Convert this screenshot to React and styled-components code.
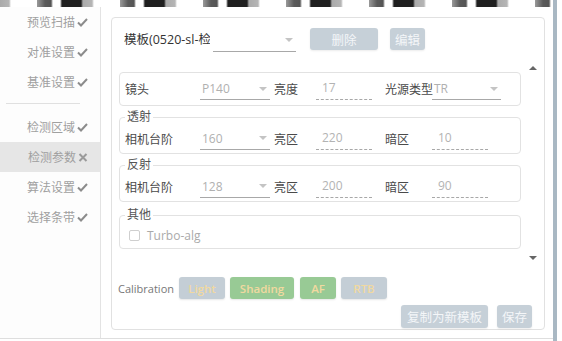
import React from 'react';
import styled, { createGlobalStyle } from 'styled-components';

const GlobalStyle = createGlobalStyle`
  * { box-sizing: border-box; }
  html, body { margin: 0; padding: 0; background: #fff; }
  body { font-family: "Open Sans", "Noto Sans CJK SC", sans-serif; }
`;

const menu = [
  { name: '预览扫描', state: 'ok' },
  { name: '对准设置', state: 'ok' },
  { name: '基准设置', state: 'ok' },
  { divider: true },
  { name: '检测区域', state: 'ok' },
  { name: '检测参数', state: 'fail', active: true },
  { name: '算法设置', state: 'ok' },
  { name: '选择条带', state: 'ok' },
];

const CheckIcon = () => (
  <svg width="11" height="9" viewBox="0 0 11 9">
    <path d="M1 4.5 L4 7.5 L10 1" fill="none" stroke="#8c8c8c" strokeWidth="2" />
  </svg>
);

const CrossIcon = () => (
  <svg width="10" height="9" viewBox="0 0 10 9">
    <path d="M1.5 1 L8.5 8 M8.5 1 L1.5 8" fill="none" stroke="#9a9a9a" strokeWidth="2" />
  </svg>
);

const SelectBox = ({ value, width }) => (
  <Select $width={width}>
    <span>{value}</span>
    <Caret />
  </Select>
);

const App = () => (
  <>
    <GlobalStyle />
    <Screen>
      <Content>
        <TopStrip />
        <Body>
          <Sidebar>
            {menu.map((m, i) =>
              m.divider ? (
                <Divider key={i} />
              ) : (
                <MenuItem key={i} $active={m.active}>
                  {m.name}
                  {m.state === 'ok' ? <CheckIcon /> : <CrossIcon />}
                </MenuItem>
              )
            )}
          </Sidebar>
          <Main>
            <Panel>
              <Header>
                <TemplateName>模板(0520-sl-检测参数)</TemplateName>
                <SelectBox value="" width={83} />
                <GrayButton $width={68} $ml={14}>删除</GrayButton>
                <GrayButton $width={35} $ml={12}>编辑</GrayButton>
              </Header>

              <ScrollArea>
                <FieldList>
                  <Group $plain>
                    <Row $height={30}>
                      <Label>镜头</Label>
                      <SelectBox value="P140" width={70} />
                      <Label $pl={4}>亮度</Label>
                      <Input>17</Input>
                      <Label $pl={13}>光源类型</Label>
                      <SelectBox value="TR" width={69} />
                    </Row>
                  </Group>
                  <Group>
                    <Legend>透射</Legend>
                    <Row>
                      <Label>相机台阶</Label>
                      <SelectBox value="160" width={70} />
                      <Label $pl={4}>亮区</Label>
                      <Input>220</Input>
                      <Label $pl={13}>暗区</Label>
                      <Input>10</Input>
                    </Row>
                  </Group>
                  <Group>
                    <Legend>反射</Legend>
                    <Row>
                      <Label>相机台阶</Label>
                      <SelectBox value="128" width={70} />
                      <Label $pl={4}>亮区</Label>
                      <Input>200</Input>
                      <Label $pl={13}>暗区</Label>
                      <Input>90</Input>
                    </Row>
                  </Group>
                  <Group $mt={2}>
                    <Legend>其他</Legend>
                    <CheckRow>
                      <CheckBox />
                      <CheckLabel>Turbo-alg</CheckLabel>
                    </CheckRow>
                  </Group>
                </FieldList>
                <ArrowCol>
                  <Arrow $up />
                  <Arrow />
                </ArrowCol>
              </ScrollArea>

              <CalibrationRow>
                <CalLabel>Calibration</CalLabel>
                <CalButton $width={46}>Light</CalButton>
                <CalButton $width={64} $done>Shading</CalButton>
                <CalButton $width={36} $done $ml={1}>AF</CalButton>
                <CalButton $width={46}>RTB</CalButton>
              </CalibrationRow>

              <Footer>
                <GrayButton $width={87} $height={23}>复制为新模板</GrayButton>
                <GrayButton $width={35} $height={23} $ml={9}>保存</GrayButton>
              </Footer>
            </Panel>
          </Main>
        </Body>
      </Content>
      <ScrollRail />
    </Screen>
  </>
);

export default App;

const Screen = styled.div`
  width: 562px;
  height: 341px;
  display: flex;
  overflow: hidden;
  background: #fff;
`;

const Content = styled.div`
  width: 553px;
  display: flex;
  flex-direction: column;
`;

const ScrollRail = styled.div`
  width: 4px;
  background: #a9b8c3;
`;

const TopStrip = styled.div`
  height: 7px;
  flex-shrink: 0;
  background-image: linear-gradient(
    90deg,
    #9a9a9a 0px, #5a5a5a 8px, #555 14px,
    #fff 16px, #fff 23px,
    #1f1f1f 25px, #1f1f1f 44px,
    #aaa 46px, #b5b5b5 55px,
    #fff 57px, #fff 83px
  );
  background-size: 83px 7px;
  background-position: 37px 0;
  background-repeat: repeat-x;
`;

const Body = styled.div`
  height: 332px;
  display: flex;
  border-bottom: 1px solid #dedede;
`;

const Sidebar = styled.div`
  width: 101px;
  flex-shrink: 0;
  border-right: 1px solid #e3e3e3;
  background: #fdfdfd;
  font-size: 12px;
  color: #a0a0a0;
`;

const MenuItem = styled.div`
  height: 30px;
  display: flex;
  align-items: center;
  justify-content: flex-end;
  gap: 2px;
  padding-right: 12px;
  background: ${p => (p.$active ? '#e6e6e6' : 'transparent')};
`;

const Divider = styled.div`
  height: 1px;
  margin: 6px 20px 8px 6px;
  background: #e0e0e0;
`;

const Main = styled.div`
  flex: 1;
  padding: 10px 8px 8px 10px;
  background: #fff;
`;

const Panel = styled.div`
  height: 100%;
  border: 1px solid #e1e1e1;
  border-radius: 4px;
  display: flex;
  flex-direction: column;
`;

const Header = styled.div`
  display: flex;
  align-items: flex-start;
  margin-top: 10px;
  padding-left: 12px;
  height: 24px;
`;

const TemplateName = styled.div`
  width: 86px;
  line-height: 24px;
  font-size: 12.5px;
  color: #333;
  white-space: nowrap;
  overflow: hidden;
`;

const Select = styled.div`
  width: ${p => p.$width}px;
  height: 22px;
  display: flex;
  align-items: center;
  justify-content: space-between;
  padding: 0 3px 0 2px;
  border-bottom: 1px solid #a8a8a8;
  font-size: 12px;
  color: #b0b0b0;
  ${Header} & {
    height: 24px;
    margin-left: 3px;
  }
`;

const Caret = styled.span`
  width: 0;
  height: 0;
  border-left: 4px solid transparent;
  border-right: 4px solid transparent;
  border-top: 4px solid #c4c4c4;
`;

const GrayButton = styled.div`
  width: ${p => p.$width}px;
  height: ${p => p.$height || 22}px;
  margin-left: ${p => p.$ml || 0}px;
  display: flex;
  align-items: center;
  justify-content: center;
  background: #c6d0d8;
  border-radius: 3px;
  box-shadow: 0 1px 2px rgba(0, 0, 0, 0.08);
  color: #f4f6f8;
  font-size: 12.5px;
  white-space: nowrap;
`;

const ScrollArea = styled.div`
  height: 204px;
  margin-top: 10px;
  display: flex;
`;

const FieldList = styled.div`
  width: 409px;
  padding: 10px 0 0 7px;
  display: flex;
  flex-direction: column;
  gap: 4px;
`;

const Group = styled.fieldset`
  margin: ${p => p.$mt || 0}px 0 0;
  padding: ${p => (p.$plain ? '1px 5px' : '0 5px')};
  border: 1px solid #e2e2e2;
  border-radius: 4px;
  min-width: 0;
`;

const Legend = styled.legend`
  padding: 0 2px;
  font-size: 12px;
  line-height: 14px;
  color: #555;
`;

const Row = styled.div`
  height: ${p => p.$height || 29}px;
  display: grid;
  grid-template-columns: 75px 70px 46px 56px 60px auto;
  align-items: center;
`;

const Label = styled.div`
  padding-left: ${p => p.$pl || 0}px;
  font-size: 12px;
  color: #4a4a4a;
  white-space: nowrap;
`;

const Input = styled.div`
  width: 56px;
  height: 22px;
  display: flex;
  align-items: center;
  padding: 0 0 2px 6px;
  border-bottom: 1px dashed #a8a8a8;
  font-size: 12px;
  color: #b3b3b3;
`;

const CheckRow = styled.div`
  height: 26px;
  display: flex;
  align-items: center;
  padding-left: 4px;
`;

const CheckBox = styled.span`
  width: 11px;
  height: 11px;
  border: 1px solid #cfcfcf;
  border-radius: 2px;
  background: #fff;
`;

const CheckLabel = styled.span`
  margin-left: 7px;
  font-size: 12px;
  color: #aaa;
`;

const ArrowCol = styled.div`
  flex: 1;
  display: flex;
  flex-direction: column;
  justify-content: space-between;
  align-items: center;
  padding: 4px 0 6px;
`;

const Arrow = styled.span`
  width: 0;
  height: 0;
  border-left: 4px solid transparent;
  border-right: 4px solid transparent;
  ${p => (p.$up ? 'border-bottom: 4px solid #666;' : 'border-top: 4px solid #666;')}
`;

const CalibrationRow = styled.div`
  margin-top: 11px;
  padding-left: 6px;
  display: flex;
  align-items: center;
  gap: 5px;
`;

const CalLabel = styled.div`
  width: 56px;
  font-size: 11px;
  color: #777;
  white-space: nowrap;
`;

const CalButton = styled.div`
  width: ${p => p.$width}px;
  height: 22px;
  margin-left: ${p => p.$ml || 0}px;
  display: flex;
  align-items: center;
  justify-content: center;
  border-radius: 3px;
  background: ${p => (p.$done ? '#98ca95' : '#c4ced6')};
  box-shadow: 0 1px 2px rgba(0, 0, 0, 0.1);
  color: #f1d9a0;
  font-size: 11.5px;
  font-weight: 600;
`;

const Footer = styled.div`
  margin-top: 6px;
  padding-right: 12px;
  display: flex;
  justify-content: flex-end;
`;
